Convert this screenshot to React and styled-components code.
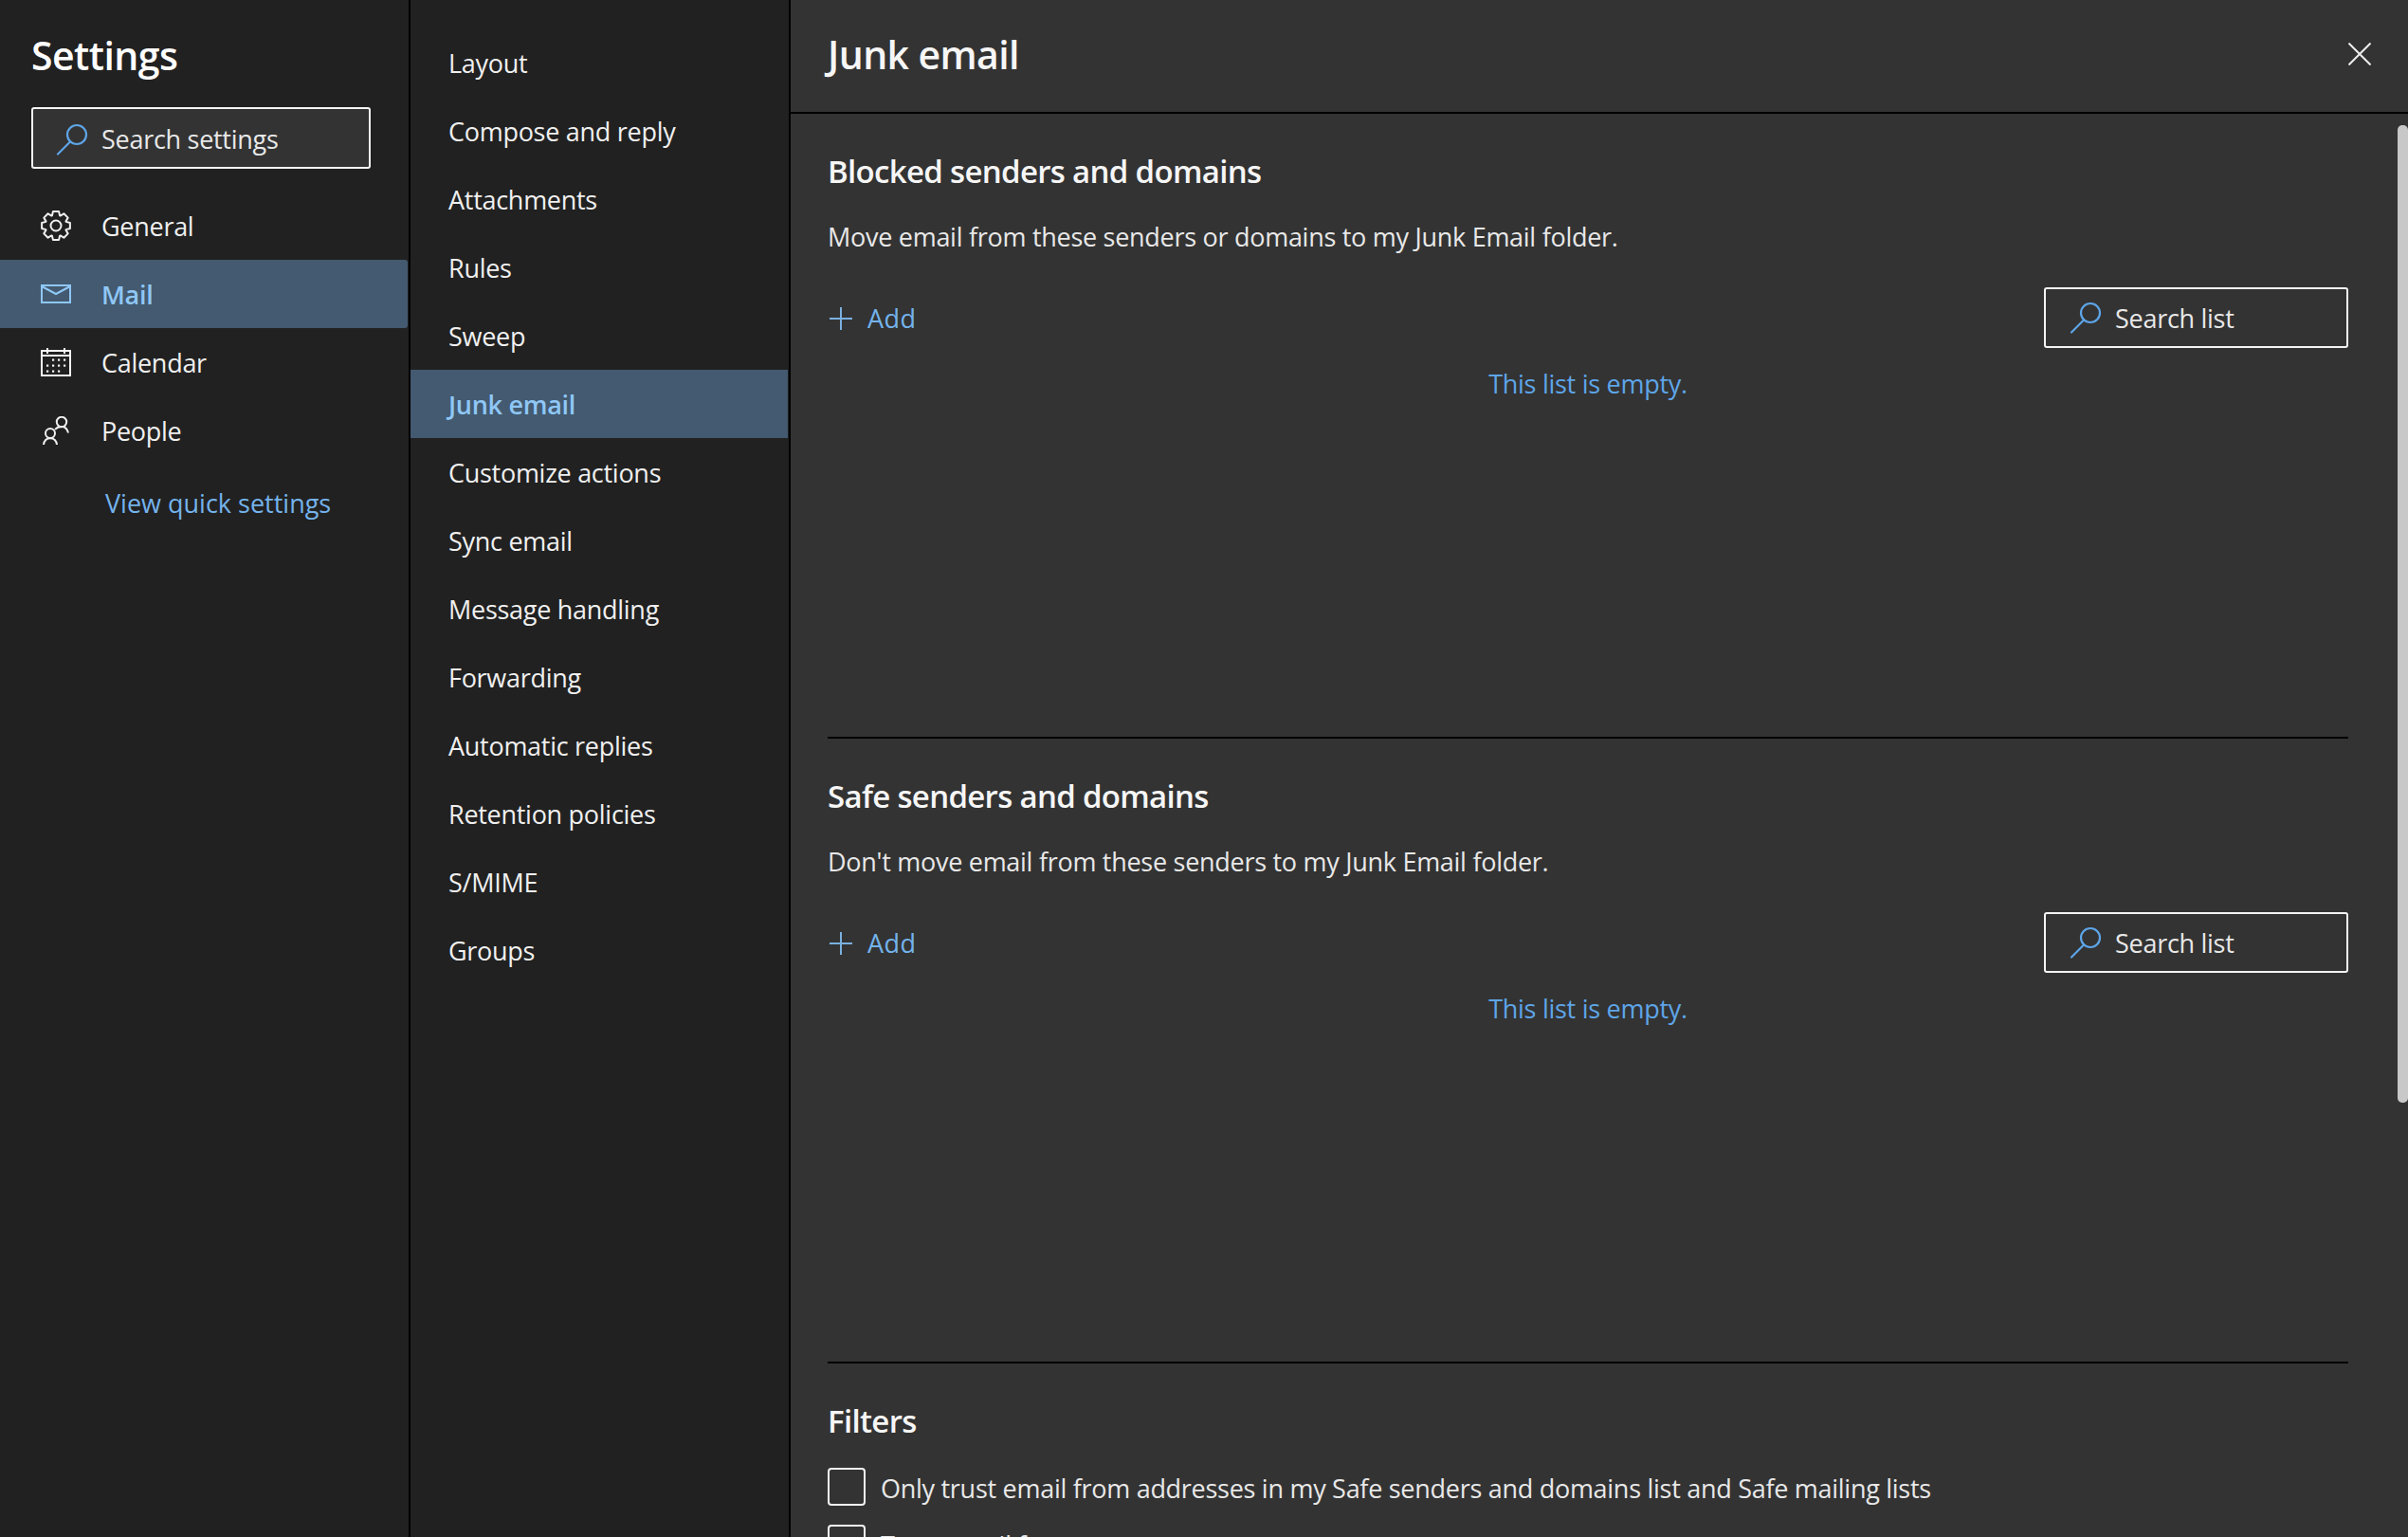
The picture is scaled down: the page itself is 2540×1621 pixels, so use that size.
import React from 'react'
import styled, { createGlobalStyle } from 'styled-components'

const GlobalStyle = createGlobalStyle`
	html, body { margin: 0; padding: 0; background: #333333; overflow: hidden; }
	* { box-sizing: border-box; }
`

const FONT = `"Open Sans", "Noto Sans", sans-serif`
const BLUE = '#5ea5e8'
const LIGHT_BLUE = '#8fc7f6'
const LINK = '#74b3ec'
const TRACKING = '-0.28px'

const Page = styled.div`
	display: grid;
	grid-template-columns: 433px 401px 1fr;
	width: 2540px;
	height: 1621px;
	overflow: hidden;
	font-family: ${FONT};
	color: #f2f2f2;
`

const SideColumn = styled.nav`
	background: #212121;
	border-right: 2px solid #000;
	padding-right: 1px;
`

const SettingsTitle = styled.h1`
	margin: 0;
	padding: 34px 0 0 33px;
	height: 113px;
	font-size: 41px;
	line-height: 48px;
	font-weight: 600;
	letter-spacing: -0.55px;
	color: #fff;
`

const SearchBox = styled.div`
	display: flex;
	align-items: center;
	gap: 14px;
	padding: ${props => props.$nudge}px 0 0 ${props => props.$inset}px;
	width: ${props => props.$width}px;
	height: ${props => props.$height}px;
	border: 2px solid #f4f4f4;
	border-radius: 3px;
	background: ${props => props.$fill || 'transparent'};
	font-size: 27px;
	letter-spacing: ${TRACKING};
	color: #e8e8e8;
	flex-shrink: 0;
`

const SearchWrap = styled.div`
	padding-left: 33px;
	margin-bottom: 24px;
`

const NavRow = styled.div`
	display: flex;
	align-items: center;
	height: 72px;
	padding-left: 43px;
	gap: 32px;
	font-size: 27px;
	letter-spacing: ${TRACKING};
	font-weight: ${props => (props.$active ? 600 : 400)};
	color: ${props => (props.$active ? LIGHT_BLUE : '#f0f0f0')};
	background: ${props => (props.$active ? '#435a70' : 'transparent')};
	border-radius: ${props => (props.$active ? '0 3px 3px 0' : '0')};
`

const NavIcon = styled.span`
	display: flex;
	align-items: center;
	justify-content: center;
	width: 32px;
	height: 32px;
`

const QuickLink = styled.a`
	display: block;
	margin: 17px 0 0 111px;
	line-height: 48px;
	font-size: 27px;
	letter-spacing: 0;
	color: ${LINK};
`

const SubColumn = styled.nav`
	background: #212121;
	border-right: 2px solid #000;
	padding: 30px 1px 0 0;
`

const SubRow = styled.div`
	display: flex;
	align-items: center;
	height: 72px;
	padding-left: 40px;
	font-size: 27px;
	letter-spacing: ${TRACKING};
	font-weight: ${props => (props.$active ? 600 : 400)};
	color: ${props => (props.$active ? LIGHT_BLUE : '#f0f0f0')};
	background: ${props => (props.$active ? '#435a70' : 'transparent')};
`

const Main = styled.main`
	position: relative;
	display: flex;
	flex-direction: column;
	background: #333333;
	overflow: hidden;
`

const Header = styled.header`
	display: flex;
	align-items: center;
	justify-content: space-between;
	flex-shrink: 0;
	height: 120px;
	padding: 0 39px 4px 39px;
	border-bottom: 2px solid #000;
`

const PageTitle = styled.h2`
	margin: 0;
	font-size: 41px;
	line-height: 48px;
	font-weight: 600;
	letter-spacing: -0.6px;
	color: #f6f6f6;
`

const Body = styled.div`
	padding: 0 63px 0 39px;
`

const Section = styled.section`
	height: 659px;
	padding-top: 39px;
	border-bottom: 2px solid #000;
`

const FilterSection = styled.section`
	padding-top: 39px;
`

const SectionTitle = styled.h3`
	margin: 0;
	font-size: 33px;
	line-height: 44px;
	font-weight: 600;
	letter-spacing: -0.68px;
	color: #f6f6f6;
`

const Description = styled.p`
	margin: 27px 0 0;
	font-size: 27px;
	line-height: 40px;
	letter-spacing: ${TRACKING};
	color: #e8e8e8;
`

const ActionRow = styled.div`
	display: flex;
	align-items: center;
	justify-content: space-between;
	margin-top: 33px;
`

const AddButton = styled.div`
	display: flex;
	align-items: center;
	gap: 16px;
	padding: 1px 0 0 2px;
	font-size: 27px;
	letter-spacing: 0.4px;
	color: ${LINK};
`

const EmptyNote = styled.div`
	margin-top: 18px;
	text-align: center;
	font-size: 27px;
	line-height: 40px;
	letter-spacing: ${TRACKING};
	color: ${BLUE};
`

const FilterRow = styled.label`
	display: flex;
	align-items: center;
	gap: 16px;
	height: 40px;
	margin-top: ${props => props.$top}px;
	font-size: 27px;
	letter-spacing: ${TRACKING};
	color: #e8e8e8;
`

const FilterText = styled.span`
	padding-top: 2px;
`

const CheckBox = styled.span`
	width: 40px;
	height: 40px;
	flex-shrink: 0;
	border: 2px solid #f4f4f4;
	border-radius: 4px;
`

const ScrollThumb = styled.div`
	position: absolute;
	top: 132px;
	right: 0;
	width: 11px;
	height: 1031px;
	background: #c8c8c8;
	border-radius: 5px;
`

const SearchIcon = () => (
	<svg width="34" height="34" viewBox="0 0 34 34" fill="none" stroke={BLUE} strokeWidth="2.2" style={{ flexShrink: 0 }}>
		<circle cx="22" cy="12" r="10" />
		<path d="M15 19.5 L2 32.5" strokeLinecap="round" />
	</svg>
)

// eight toothed cog, points worked out round the centre
const gearPath = () => {
	const pts = []
	const teeth = 8
	for (let i = 0; i < teeth; i++) {
		const a = (i / teeth) * Math.PI * 2 - Math.PI / 2
		const step = (Math.PI * 2) / teeth
		const corners = [[11.4, -0.5], [15.2, -0.27], [15.2, 0.27], [11.4, 0.5]]
		corners.forEach(([r, off]) => {
			const t = a + off * step * 0.95
			pts.push(`${(16 + r * Math.cos(t)).toFixed(2)} ${(16 + r * Math.sin(t)).toFixed(2)}`)
		})
	}
	return 'M' + pts.join(' L') + ' Z'
}

const GearIcon = () => (
	<svg width="32" height="32" viewBox="0 0 32 32" fill="none" stroke="#f0f0f0" strokeWidth="2" strokeLinejoin="round">
		<path d={gearPath()} />
		<circle cx="16" cy="16" r="5.5" />
	</svg>
)

const MailIcon = () => (
	<svg width="32" height="20" viewBox="0 0 32 20" fill="none" stroke={LIGHT_BLUE} strokeWidth="2">
		<rect x="1" y="1" width="30" height="18" />
		<path d="M1 2 L16 10 L31 2" />
	</svg>
)

// four columns by three rows, the first and last places are left out
const calendarDots = []
for (let row = 0; row < 3; row++) {
	for (let col = 0; col < 4; col++) {
		if ((row === 0 && col === 0) || (row === 2 && col === 3)) continue
		calendarDots.push([7 + col * 6, 12.5 + row * 6])
	}
}

const CalendarIcon = () => (
	<svg width="32" height="30" viewBox="0 0 32 30" fill="none" stroke="#f6f6f6" strokeWidth="2">
		<rect x="1" y="3" width="30" height="26" />
		<path d="M1 8 H31 M7 0 V6 M25 0 V6" />
		{calendarDots.map(([x, y]) => (
			<rect key={x + '-' + y} x={x - 1} y={y - 1} width="2.2" height="2.2" fill="#f6f6f6" stroke="none" />
		))}
	</svg>
)

const PeopleIcon = () => (
	<svg width="28" height="30" viewBox="0 0 28 30" fill="none" stroke="#f0f0f0" strokeWidth="2">
		<circle cx="20" cy="6" r="5.2" />
		<path d="M13 14 C15 11.5 17.5 11 20 11 C23.5 11 26 13.5 27 17.5" />
		<circle cx="8" cy="18" r="5" />
		<path d="M1 30 C1.5 26 4 23.2 8 23.2 C12 23.2 14.5 26 15 30" />
	</svg>
)

const PlusIcon = () => (
	<svg width="24" height="24" viewBox="0 0 24 24" stroke="#7ab0e0" strokeWidth="2">
		<path d="M12 0 V24 M0 12 H24" />
	</svg>
)

const CloseIcon = () => (
	<svg width="24" height="24" viewBox="0 0 24 24" stroke="#eeeeee" strokeWidth="2">
		<path d="M0.5 0.5 L23.5 23.5 M23.5 0.5 L0.5 23.5" />
	</svg>
)

const navItems = [
	{ label: 'General', icon: <GearIcon /> },
	{ label: 'Mail', icon: <MailIcon />, active: true },
	{ label: 'Calendar', icon: <CalendarIcon /> },
	{ label: 'People', icon: <PeopleIcon /> },
]

const subItems = [
	'Layout', 'Compose and reply', 'Attachments', 'Rules', 'Sweep', 'Junk email',
	'Customize actions', 'Sync email', 'Message handling', 'Forwarding',
	'Automatic replies', 'Retention policies', 'S/MIME', 'Groups',
]

const ListSection = ({ title, text }) => (
	<Section>
		<SectionTitle>{title}</SectionTitle>
		<Description>{text}</Description>
		<ActionRow>
			<AddButton><PlusIcon />Add</AddButton>
			<SearchBox $width={321} $height={64} $inset={25} $nudge={0}><SearchIcon />Search list</SearchBox>
		</ActionRow>
		<EmptyNote>This list is empty.</EmptyNote>
	</Section>
)

export default function App() {
	return (
		<Page>
			<GlobalStyle />
			<SideColumn>
				<SettingsTitle>Settings</SettingsTitle>
				<SearchWrap>
					<SearchBox $width={358} $height={65} $inset={24} $nudge={2} $fill="#333333"><SearchIcon />Search settings</SearchBox>
				</SearchWrap>
				{navItems.map(item => (
					<NavRow key={item.label} $active={item.active}>
						<NavIcon>{item.icon}</NavIcon>
						{item.label}
					</NavRow>
				))}
				<QuickLink>View quick settings</QuickLink>
			</SideColumn>
			<SubColumn>
				{subItems.map(item => (
					<SubRow key={item} $active={item === 'Junk email'}>{item}</SubRow>
				))}
			</SubColumn>
			<Main>
				<Header>
					<PageTitle>Junk email</PageTitle>
					<CloseIcon />
				</Header>
				<Body>
					<ListSection
						title="Blocked senders and domains"
						text="Move email from these senders or domains to my Junk Email folder."
					/>
					<ListSection
						title="Safe senders and domains"
						text="Don't move email from these senders to my Junk Email folder."
					/>
					<FilterSection>
						<SectionTitle>Filters</SectionTitle>
						<FilterRow $top={27}>
							<CheckBox />
							<FilterText>Only trust email from addresses in my Safe senders and domains list and Safe mailing lists</FilterText>
						</FilterRow>
						<FilterRow $top={20}>
							<CheckBox />
							<FilterText>Trust email from my contacts</FilterText>
						</FilterRow>
					</FilterSection>
				</Body>
				<ScrollThumb />
			</Main>
		</Page>
	)
}
